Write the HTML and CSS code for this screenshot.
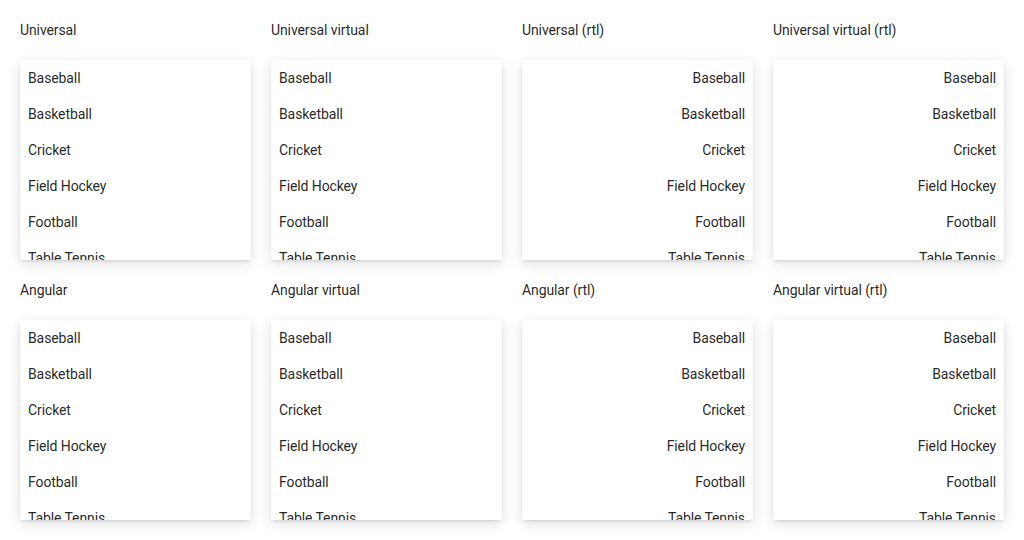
FILE: index.html
```html
<!DOCTYPE html>
<html>
<head>
<meta charset="utf-8">
<link rel="stylesheet" href="styles.css">
</head>
<body>
<div class="grid">
  <div class="cell">
    <div class="title">Universal</div>
    <div class="panel">
      <div class="item">Baseball</div><div class="item">Basketball</div><div class="item">Cricket</div><div class="item">Field Hockey</div><div class="item">Football</div><div class="item">Table Tennis</div><div class="item">Tennis</div><div class="item">Volleyball</div>
    </div>
  </div>
  <div class="cell">
    <div class="title">Universal virtual</div>
    <div class="panel">
      <div class="item">Baseball</div><div class="item">Basketball</div><div class="item">Cricket</div><div class="item">Field Hockey</div><div class="item">Football</div><div class="item">Table Tennis</div><div class="item">Tennis</div><div class="item">Volleyball</div>
    </div>
  </div>
  <div class="cell">
    <div class="title">Universal (rtl)</div>
    <div class="panel rtl" dir="rtl">
      <div class="item">Baseball</div><div class="item">Basketball</div><div class="item">Cricket</div><div class="item">Field Hockey</div><div class="item">Football</div><div class="item">Table Tennis</div><div class="item">Tennis</div><div class="item">Volleyball</div>
    </div>
  </div>
  <div class="cell">
    <div class="title">Universal virtual (rtl)</div>
    <div class="panel rtl" dir="rtl">
      <div class="item">Baseball</div><div class="item">Basketball</div><div class="item">Cricket</div><div class="item">Field Hockey</div><div class="item">Football</div><div class="item">Table Tennis</div><div class="item">Tennis</div><div class="item">Volleyball</div>
    </div>
  </div>
  <div class="cell">
    <div class="title">Angular</div>
    <div class="panel">
      <div class="item">Baseball</div><div class="item">Basketball</div><div class="item">Cricket</div><div class="item">Field Hockey</div><div class="item">Football</div><div class="item">Table Tennis</div><div class="item">Tennis</div><div class="item">Volleyball</div>
    </div>
  </div>
  <div class="cell">
    <div class="title">Angular virtual</div>
    <div class="panel">
      <div class="item">Baseball</div><div class="item">Basketball</div><div class="item">Cricket</div><div class="item">Field Hockey</div><div class="item">Football</div><div class="item">Table Tennis</div><div class="item">Tennis</div><div class="item">Volleyball</div>
    </div>
  </div>
  <div class="cell">
    <div class="title">Angular (rtl)</div>
    <div class="panel rtl" dir="rtl">
      <div class="item">Baseball</div><div class="item">Basketball</div><div class="item">Cricket</div><div class="item">Field Hockey</div><div class="item">Football</div><div class="item">Table Tennis</div><div class="item">Tennis</div><div class="item">Volleyball</div>
    </div>
  </div>
  <div class="cell">
    <div class="title">Angular virtual (rtl)</div>
    <div class="panel rtl" dir="rtl">
      <div class="item">Baseball</div><div class="item">Basketball</div><div class="item">Cricket</div><div class="item">Field Hockey</div><div class="item">Football</div><div class="item">Table Tennis</div><div class="item">Tennis</div><div class="item">Volleyball</div>
    </div>
  </div>
</div>
</body>
</html>
```
FILE: styles.css
```css
html, body {
  margin: 0;
  padding: 0;
  background: #fff;
}
body {
  font-family: Roboto, "Liberation Sans", sans-serif;
  font-size: 14px;
  color: rgba(0, 0, 0, 0.87);
}
.grid {
  display: grid;
  grid-template-columns: repeat(4, 1fr);
  column-gap: 20px;
  padding: 0 20px 40px;
}
.cell {
  display: flex;
  flex-direction: column;
  height: 260px;
}
.title {
  height: 60px;
  line-height: 60px;
  letter-spacing: -0.1px;
}
.panel {
  height: 200px;
  overflow: hidden;
  background: #fff;
  box-shadow: 0 2px 3px -1px rgba(0,0,0,.12), 0 5px 14px 1px rgba(0,0,0,.07), 0 1px 10px 0 rgba(0,0,0,.05);
}
.item {
  height: 36px;
  line-height: 36px;
  padding: 0 8px;
  white-space: nowrap;
  letter-spacing: -0.1px;
}
.rtl .item {
  text-align: right;
}
```
